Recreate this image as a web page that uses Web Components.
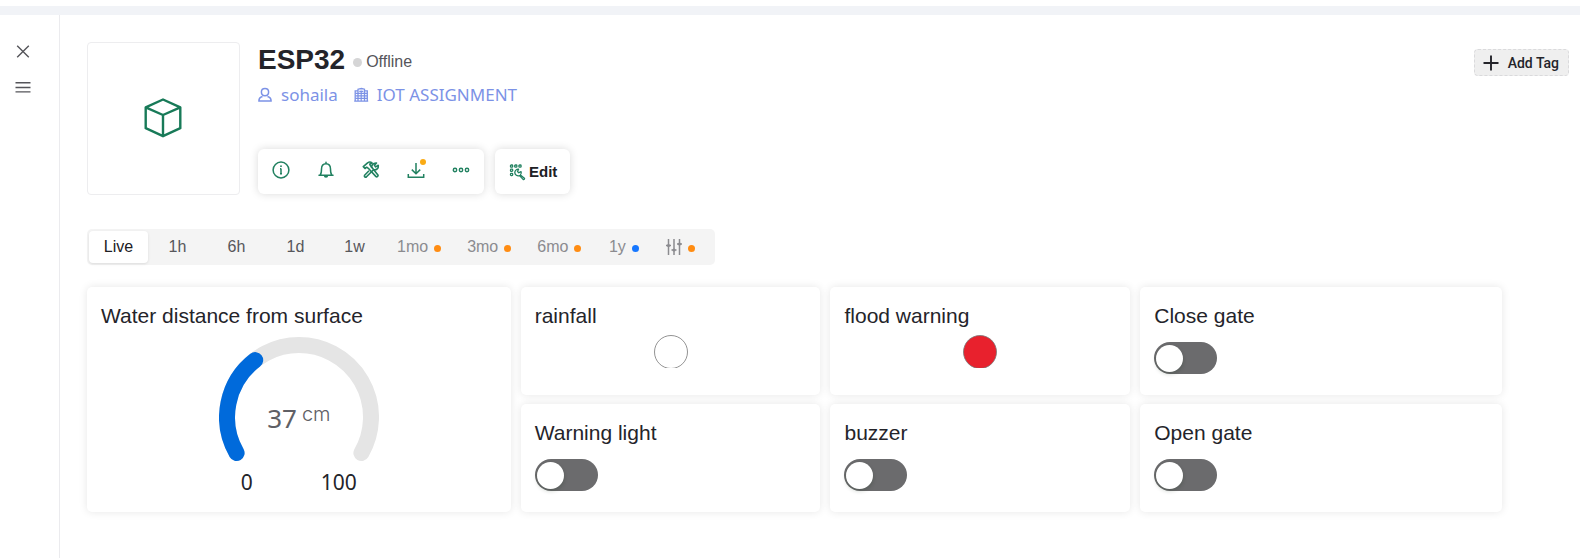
<!DOCTYPE html>
<html lang="en">
<head>
<meta charset="utf-8">
<meta name="viewport" content="width=device-width, initial-scale=1">
<title>ESP32</title>
<style>
  body { margin: 0; background: #fff; color: #24242a; font-family: "Liberation Sans", Arial, sans-serif; }
</style>
</head>
<body>
<device-page>
  <side-rail slot="rail"></side-rail>
  <device-header slot="header" name="ESP32" status="Offline" owner="sohaila" org="IOT ASSIGNMENT"></device-header>
  <time-range slot="range"></time-range>
  <widget-grid slot="widgets">
    <widget-card class="tall" label="Water distance from surface"><gauge-dial value="37" unit="cm" min="0" max="100"></gauge-dial></widget-card>
    <widget-card label="rainfall"><status-lamp></status-lamp></widget-card>
    <widget-card label="flood warning"><status-lamp on></status-lamp></widget-card>
    <widget-card label="Close gate"><toggle-switch label="Close gate"></toggle-switch></widget-card>
    <widget-card label="Warning light"><toggle-switch label="Warning light"></toggle-switch></widget-card>
    <widget-card label="buzzer"><toggle-switch label="buzzer"></toggle-switch></widget-card>
    <widget-card label="Open gate"><toggle-switch label="Open gate"></toggle-switch></widget-card>
  </widget-grid>
</device-page>

<script>
const RESET = `:host,*{box-sizing:border-box} button{font:inherit;color:inherit;background:none;border:0;padding:0;margin:0;cursor:pointer} svg{display:block;flex:none}`;

function define(name, render) {
  customElements.define(name, class extends HTMLElement {
    connectedCallback() {
      if (this.shadowRoot) return;
      this.attachShadow({ mode: 'open' }).innerHTML = render(this);
    }
  });
}

const svg = (w, h, body, extra = '') =>
  `<svg width="${w}" height="${h}" viewBox="0 0 ${w} ${h}" fill="none" stroke="currentColor" aria-hidden="true" ${extra}>${body}</svg>`;

const ICONS = {
  close: svg(16, 16, '<path d="M2.200 2.700l11.600 11.600M13.800 2.700L2.200 14.300" stroke-width="1.400"/>'),
  menu: svg(16, 16, '<path d="M.5 3.700h15M.5 8.500h15M.5 12.900h15" stroke-width="1.400"/>'),
  cube: svg(40, 42, '<path d="M20 2.500L37.300 10.300V31.200L20 39.200L2.700 31.200V10.300zM2.700 10.300L20 18L37.300 10.300M20 18V39" stroke-width="2.400" stroke-linejoin="round"/>'),
  user: svg(16, 16, '<path d="M8 1.500c2.300 0 3.600 1.600 3.600 3.500S10.300 8.700 8 8.700 4.400 6.900 4.400 5 5.700 1.500 8 1.500zM1.900 14c0-2.500 1.300-3.900 3.600-4.500M14.100 14c0-2.500-1.300-3.900-3.600-4.500M1.200 14.100h13.600" stroke-width="1.500"/>'),
  building: svg(16, 16, '<path d="M2.200 14V3.800H5V14M5 14V2.200L8.500 1.500l3 .7V14M11.500 3.800h2.800V14M1.200 14.200h14" stroke-width="1.300"/><path d="M2.500 6.300h11.500M2.500 8.800h11.500M2.500 11.300h11.500M8.200 3.500v10.500M6.300 4.300h4" stroke-width="1.200"/>'),
  info: svg(18, 18, '<circle cx="9" cy="9" r="7.900" stroke-width="1.500"/><path d="M9 7.400V13M8 7.700h1M8 12.800h2" stroke-width="1.500"/><circle cx="9" cy="5.200" r=".9" fill="currentColor" stroke="none"/>'),
  bell: svg(18, 18, '<path d="M9 1.200v1.500M2 14.200h14M3.200 14c1.200-1.400 1.300-2.800 1.300-6C4.500 4.800 6.400 2.700 9 2.700s4.500 2.100 4.500 5.300c0 3.200.1 4.600 1.300 6" stroke-width="1.500" stroke-linecap="round"/><path d="M6.800 14.500h4.400a2.200 2.200 0 0 1-4.400 0z" fill="currentColor" stroke="none"/>'),
  tools: svg(18, 18, '<path d="M1.300 5.600L5.600 1.800c1.500-1 3.400-.8 4.500.3-1.500 0-2.200.5-2.300 1.500l1 1.400L15.900 14c.6 1-.9 2.300-1.900 1.600L6.300 7.300 4.700 6.200 3 7.500z" stroke-width="1.600" stroke-linejoin="round"/><path d="M9.600 7.200c-.5-2.900 1.500-5.500 4.900-5.200l-2.100 2.300 1.300 1.600 2.600-1.600c.4 3-1.700 5-4.800 4.500l-7 7c-1.200 1-2.700-.4-1.900-1.600L7 9.800" stroke-width="1.600" stroke-linejoin="round"/>'),
  download: svg(18, 18, '<path d="M9 2v10.500M4.800 8.600L9 12.700l4.200-4.100M1.300 13v3.200h15.400V13" stroke-width="1.500"/>'),
  more: svg(18, 18, '<circle cx="3" cy="9" r="1.700"/><circle cx="9" cy="9" r="1.700"/><circle cx="15" cy="9" r="1.700"/>', 'stroke-width="1.400"'),
  edit: svg(18, 18, '<rect x="2.500" y="2" width="2.200" height="2.200" rx=".8"/><rect x="6.700" y="2" width="2.200" height="2.200" rx=".8"/><rect x="10.900" y="2" width="2.200" height="2.200" rx=".8"/><rect x="2.500" y="6.200" width="2.200" height="2.200" rx=".8"/><rect x="2.500" y="10.400" width="2.200" height="2.200" rx=".8"/><path d="M10.600 6.200L9.500 8.500l1.300 1.300 2.200-1.200c.6 1.300.3 2.500-.6 3.300l4 3.300c.6.900-.5 1.800-1.300 1.200l-3.600-3.800c-2.300.8-4.600-.7-4.700-3 0-2 1.600-3.500 3.800-3.400z" stroke-linejoin="round"/>', 'stroke-width="1.300"'),
  plus: svg(16, 16, '<path d="M8 .5v15M.5 8h15" stroke-width="1.900"/>'),
  sliders: svg(16, 18, '<path d="M2.500 1v16M8 1v16M13.500 1v16" stroke-width="1.500"/><path d="M0 7.500h5M5.500 12h5M11 6h5" stroke-width="1.500"/><circle cx="2.500" cy="7.500" r="1.600" fill="currentColor" stroke="none"/><circle cx="8" cy="12" r="1.600" fill="currentColor" stroke="none"/><circle cx="13.500" cy="6" r="1.600" fill="currentColor" stroke="none"/>')
};

define('device-page', () => `
  <style>${RESET}
    :host{display:flex;flex-direction:column;min-height:100vh;padding-top:6px;overflow-x:clip}
    .strip{height:9px;background:#f1f3f7}
    .body{display:flex;flex:1}
    main{flex:1;min-width:0;padding:27px 11px 27px 27px}
    ::slotted([slot=range]){margin-top:34px}
    ::slotted([slot=widgets]){margin:22px 67px 0 0}
  </style>
  <div class="strip"></div>
  <div class="body">
    <slot name="rail"></slot>
    <main><slot name="header"></slot><slot name="range"></slot><slot name="widgets"></slot></main>
  </div>`);

define('side-rail', () => `
  <style>${RESET}
    :host{display:block;flex:none;width:60px;border-right:1px solid #ebebee;padding:28px 0 0 15px;color:#55555a}
    nav{display:flex;flex-direction:column;gap:20px;align-items:flex-start}
  </style>
  <nav><button aria-label="Close">${ICONS.close}</button><button aria-label="Menu">${ICONS.menu}</button></nav>`);

define('device-header', el => `
  <style>${RESET}
    :host{display:flex;gap:18px}
    .thumb{width:153px;height:153px;padding:0 2px 2px 0;border:1px solid #ededef;border-radius:4px;display:grid;place-items:center;color:#187a58;flex:none}
    .info{flex:1;display:flex;flex-direction:column}
    .name{display:flex;align-items:center;height:36px}
    h1{font-size:28px;line-height:36px;margin:0}
    .dot{width:9px;height:9px;border-radius:50%;background:#d5d5d6;margin:5px 4px 0 8px}
    .status{font-size:16px;line-height:20px;color:#55555a;padding-top:4px}
    .meta{display:flex;gap:16px;font:17px/24px "Noto Sans",sans-serif;margin-top:5px}
    .meta a{display:flex;align-items:center;gap:8px;color:#7c92e6;text-decoration:none}
    .meta svg{margin-left:-1px}
    device-actions{margin-top:auto}
  </style>
  <div class="thumb">${ICONS.cube}</div>
  <div class="info">
    <div class="name"><h1>${el.getAttribute('name')}</h1><span class="dot"></span><span class="status">${el.getAttribute('status')}</span></div>
    <div class="meta"><a href="#owner">${ICONS.user}<span>${el.getAttribute('owner')}</span></a><a href="#org">${ICONS.building}<span>${el.getAttribute('org')}</span></a></div>
    <device-actions></device-actions>
  </div>
  <tag-button>Add Tag</tag-button>`);

define('tag-button', () => `
  <style>${RESET}
    :host{display:block;padding-top:7px}
    button{display:flex;align-items:center;gap:9px;height:27px;padding:0 9px 0 8px;border:1px dashed #dadadc;border-radius:4px;background:#efefef;font:500 14px/20px Roboto,sans-serif;white-space:nowrap}
  </style>
  <button>${ICONS.plus}<span><slot></slot></span></button>`);

define('device-actions', () => `
  <style>${RESET}
    :host{display:flex;gap:11px;padding-bottom:1px}
    .box{display:flex;align-items:center;height:45px;background:#fff;border-radius:6px;box-shadow:0 0 8px rgba(0,0,0,.15);color:#218160}
    .tools{gap:27px;padding:0 14px}
    .tools button{position:relative;height:21px;display:flex}
    .badge{position:absolute;width:6px;height:6px;border-radius:50%;background:#faab14;top:-2px;right:-1px}
    .edit{gap:3px;padding:0 13px}
    .edit span{color:#202024;font-weight:700;font-size:15px}
  </style>
  <div class="box tools">
    <button aria-label="Info">${ICONS.info}</button>
    <button aria-label="Notifications">${ICONS.bell}</button>
    <button aria-label="Tools">${ICONS.tools}</button>
    <button aria-label="Download">${ICONS.download}<i class="badge"></i></button>
    <button aria-label="More">${ICONS.more}</button>
  </div>
  <button class="box edit">${ICONS.edit}<span>Edit</span></button>`);

const RANGES = [['Live'], ['1h'], ['6h'], ['1d'], ['1w'], ['1mo', 'orange'], ['3mo', 'orange'], ['6mo', 'orange'], ['1y', 'blue'], [ICONS.sliders, 'orange', 'Custom']];
define('time-range', () => `
  <style>${RESET}
    :host{display:flex;width:max-content;height:36px;padding:2px;border-radius:5px;background:#f4f4f4;font-size:16px;color:#57575b}
    button{min-width:59px;display:flex;align-items:center;justify-content:center;border-radius:4px;line-height:32px}
    .active{background:#fff;color:#202024;box-shadow:0 1px 3px rgba(0,0,0,.1)}
    .locked{gap:6px;color:#8b8b8f;padding:0 13px}
    .locked:last-child{padding-right:18px}
    i{width:7px;height:7px;border-radius:50%;background:#ff8c12;margin-top:3px}
    .blue{background:#1677ff}
  </style>
  ${RANGES.map(([t, c, l], n) => `<button class="${c ? 'locked' : ''}${n ? '' : 'active'}"${l ? ` aria-label="${l}"` : ''}>${l ? t : `<span>${t}</span>`}${c ? `<i class="${c}"></i>` : ''}</button>`).join('')}`);

define('widget-grid', () => `
  <style>
    :host{display:grid;grid-template-columns:424fr 300fr 300fr 362fr;grid-auto-rows:minmax(108px,auto);gap:9px 10px}
    ::slotted(.tall){grid-row:span 2}
  </style><slot></slot>`);

define('widget-card', el => `
  <style>
    :host{display:block;box-sizing:border-box;min-width:0;padding:16px 14px;background:#fff;border-radius:5px;box-shadow:0 0 9px rgba(0,0,0,.1)}
    h2{margin:0;font-size:21px;line-height:26px;font-weight:400;white-space:nowrap}
  </style><h2>${el.getAttribute('label')}</h2><slot></slot>`);

define('status-lamp', () => `
  <style>
    :host{display:flex;justify-content:center;margin-top:6px}
    circle{fill:#fff;stroke:#777}
    :host([on]) circle{fill:#e8212d}
  </style>
  <svg width="34" height="33" viewBox="0 0 34 33" role="img" aria-label="Lamp"><circle cx="17" cy="17" r="16.500" stroke-width=".8"/></svg>`);

define('toggle-switch', el => `
  <style>
    :host{display:block;margin-top:13px}
    input{appearance:none;display:block;box-sizing:border-box;margin:0;width:63px;height:32px;padding:3px 2px;border-radius:16px;background:#6b6b6d;cursor:pointer}
    input::before{content:"";display:block;width:27px;height:27px;border-radius:50%;background:#fff;box-shadow:0 2px 4px rgba(0,35,11,.2)}
    input:checked{background:#187a58}
    input:checked::before{margin-left:auto}
  </style><input type="checkbox" role="switch" aria-label="${el.getAttribute('label')}">`);

define('gauge-dial', el => `
  <style>
    :host{display:grid;justify-items:center;margin-top:8px}
    .dial{display:grid;place-items:center}
    .dial>*{grid-area:1/1}
    .value{display:flex;align-items:flex-start;gap:5px;color:#606065;font:26px/36px "Noto Sans",sans-serif;padding-top:36px}
    .value small{font:300 20px/28px Inter,sans-serif}
    .scale{display:flex;justify-content:space-between;width:116px;font:21px/26px "Noto Sans",sans-serif;margin-top:6px}
  </style>
  <div class="dial">
    <svg width="160" height="126" viewBox="0 0 160 126" fill="none" stroke-width="16" stroke-linecap="round" role="img" aria-label="Gauge">
      <path d="M17.600 116A72 72 0 1 1 142.400 116" stroke="#e5e5e5"/>
      <path d="M17.600 116A72 72 0 0 1 36.200 23.100" stroke="#006adb"/>
    </svg>
    <div class="value"><span>${el.getAttribute('value')}</span><small>${el.getAttribute('unit')}</small></div>
  </div>
  <div class="scale"><span>${el.getAttribute('min')}</span><span>${el.getAttribute('max')}</span></div>`);
</script>
</body>
</html>
